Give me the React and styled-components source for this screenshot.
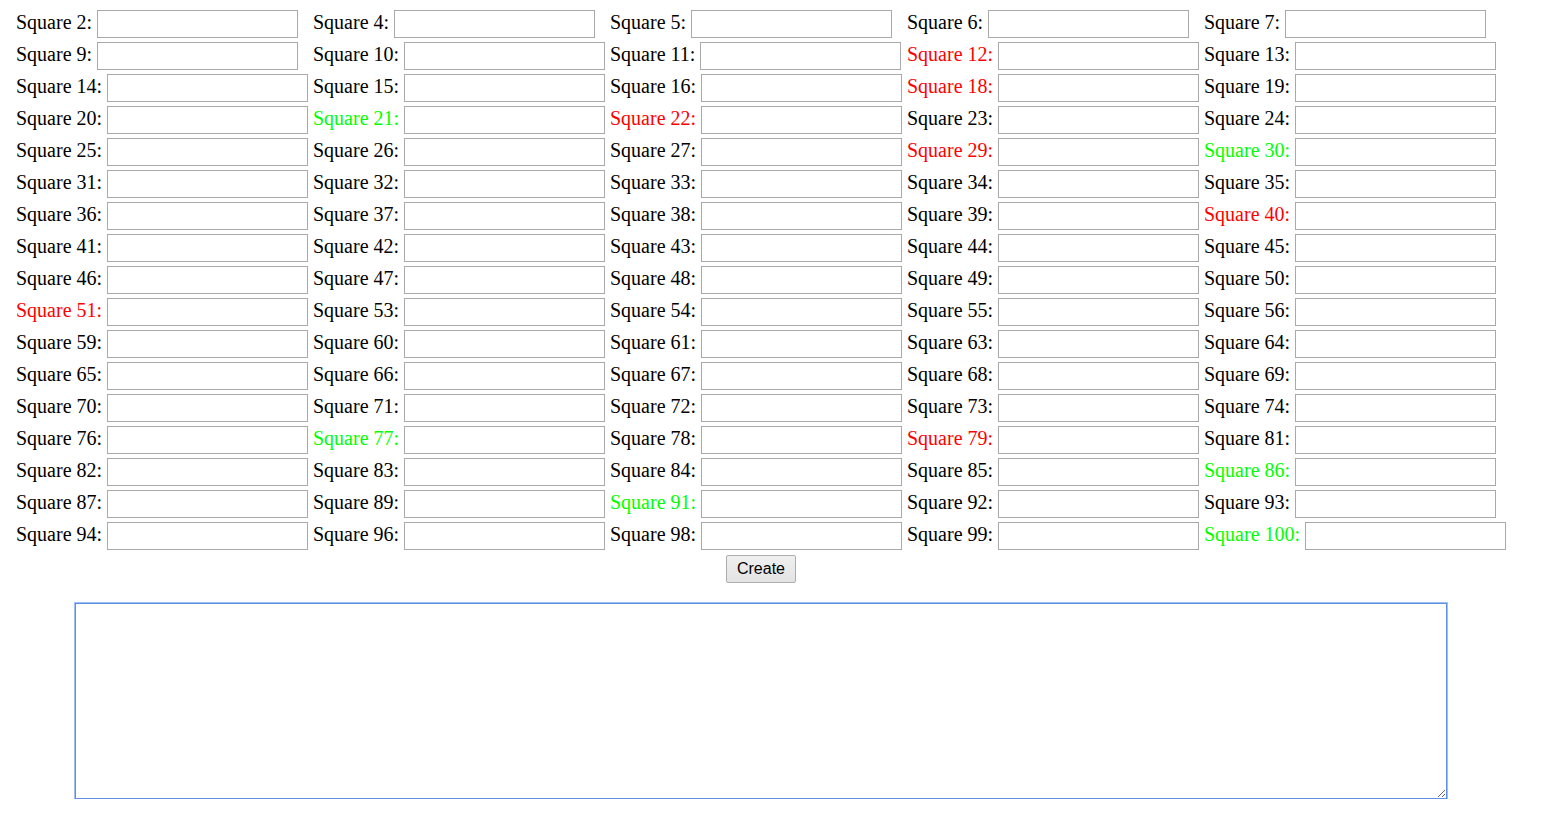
import React from "react";
import styled, { createGlobalStyle } from "styled-components";

const Global = createGlobalStyle`
  html, body { margin: 0; padding: 0; background: #fff; }
  body { font-family: "Liberation Serif", "Times New Roman", serif; }
`;

const Page = styled.div`
  width: 1522px;
  padding-top: 10px;
`;

const Grid = styled.div`
  display: grid;
  grid-template-columns: repeat(5, 297px);
  grid-auto-rows: 28px;
  row-gap: 4px;
  padding-left: 16px;
`;

const Cell = styled.div`
  display: flex;
  align-items: flex-start;
  white-space: nowrap;
`;

const Label = styled.label`
  font-family: "Liberation Serif", "Times New Roman", serif;
  font-size: 20px;
  line-height: 25px;
  color: ${(p) => (p.$tone === "red" ? "#ff0000" : p.$tone === "green" ? "#00ff00" : "#000")};
`;

const Field = styled.input`
  box-sizing: border-box;
  width: 201px;
  height: 28px;
  margin: 0 0 0 5px;
  border: 1px solid #a9a9a9;
  background: #fff;
  flex: none;
  outline: none;
`;

const Footer = styled.div`
  display: flex;
  flex-direction: column;
  align-items: center;
`;

const Button = styled.button`
  box-sizing: border-box;
  margin-top: 5px;
  width: 70px;
  height: 28px;
  padding: 0;
  font-family: "Liberation Sans", Arial, sans-serif;
  font-size: 16px;
  color: #000;
  border: 1px solid #adadad;
  border-radius: 2px;
  background: linear-gradient(#f0f0f0, #e3e3e3);
`;

const Area = styled.textarea`
  box-sizing: border-box;
  margin-top: 20px;
  width: 1372px;
  height: 196px;
  border: 1px solid #5d8fe3;
  box-shadow: 0 0 0 1px #9dbdf3;
  outline: none;
  resize: both;
  padding: 2px;
  font-family: "Liberation Mono", monospace;
  font-size: 13px;
  caret-color: #000;
`;

const rows = [
  [2, 4, 5, 6, 7],
  [9, 10, 11, 12, 13],
  [14, 15, 16, 18, 19],
  [20, 21, 22, 23, 24],
  [25, 26, 27, 29, 30],
  [31, 32, 33, 34, 35],
  [36, 37, 38, 39, 40],
  [41, 42, 43, 44, 45],
  [46, 47, 48, 49, 50],
  [51, 53, 54, 55, 56],
  [59, 60, 61, 63, 64],
  [65, 66, 67, 68, 69],
  [70, 71, 72, 73, 74],
  [76, 77, 78, 79, 81],
  [82, 83, 84, 85, 86],
  [87, 89, 91, 92, 93],
  [94, 96, 98, 99, 100],
];

const red = new Set([12, 18, 22, 29, 40, 51, 79]);
const green = new Set([21, 30, 77, 86, 91, 100]);

export default function App() {
  return (
    <Page>
      <Global />
      <Grid>
        {rows.flat().map((n) => (
          <Cell key={n}>
            <Label
              htmlFor={`sq${n}`}
              $tone={red.has(n) ? "red" : green.has(n) ? "green" : undefined}
            >
              Square {n}:
            </Label>
            <Field id={`sq${n}`} type="text" />
          </Cell>
        ))}
      </Grid>
      <Footer>
        <Button type="button">Create</Button>
        <Area autoFocus />
      </Footer>
    </Page>
  );
}
